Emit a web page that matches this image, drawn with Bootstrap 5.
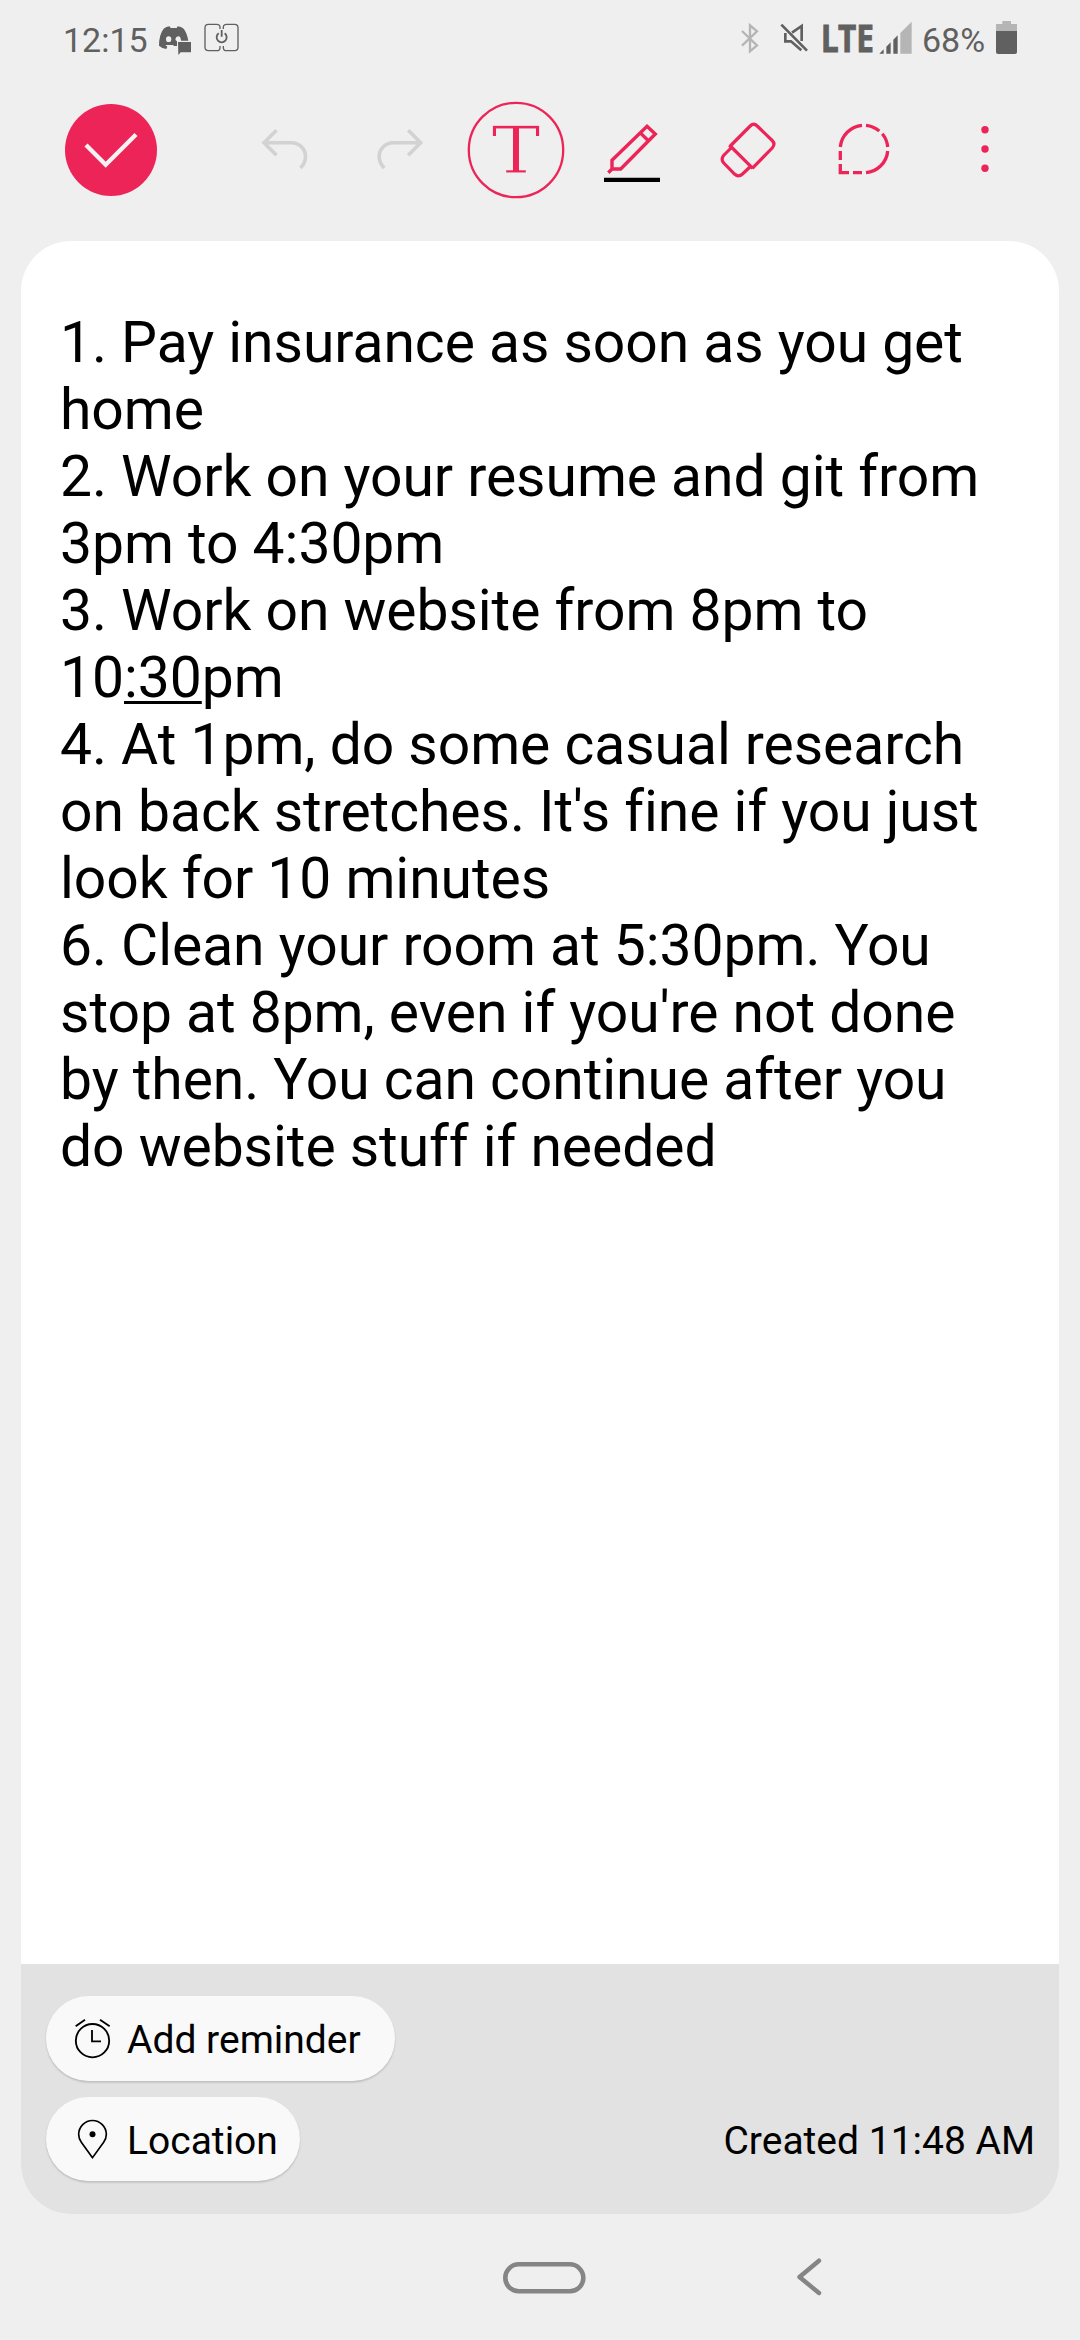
<!DOCTYPE html>
<html lang="en">
<head>
<meta charset="utf-8">
<meta name="viewport" content="width=device-width, initial-scale=1">
<title>Memo</title>
<link rel="stylesheet" href="https://cdn.jsdelivr.net/npm/bootstrap@5.3.0/dist/css/bootstrap.min.css">
<style>
  body { background: #efefef; font-family: Roboto, sans-serif; color: #000; height: 2340px; overflow: hidden; }
  svg { display: block; flex: none; }
  .status { height: 80px; padding: 0 60px 0 63px; color: #606060; font-size: 34px; line-height: 80px; }
  .status .faint { color: #b5b5b5; }
  .toolbar { height: 161px; padding: 10px 32px 0 65px; color: #ec2457; }
  .tool { height: 120px; width: 116px; }
  .tool.more { width: 126px; }
  .tool.off { color: #d2d2d2; }
  .save { width: 92px; height: 120px; margin-right: 69px; }
  .memo { margin: 0 21px; height: 1973px; border-radius: 50px; background: #fff; overflow: hidden; }
  .memo-text { padding: 68px 36px 0 39px; font-size: 57px; letter-spacing: -.04px; line-height: 67px; white-space: nowrap; }
  .memo-text u { text-decoration-thickness: 3px; text-underline-offset: 4px; text-decoration-skip-ink: none; }
  .memo-foot { height: 250px; background: #e2e2e2; padding: 32px 24px 0 25px; font-size: 39px; }
  .chip { height: 85px; border-radius: 43px; background: #f9f9f9; color: #000; box-shadow: 0 1.5px 2px rgba(0,0,0,.17); font-size: inherit; line-height: 85px; gap: 14px; }
  .chip span { padding-top: 4px; line-height: 81px; }
  .chip.remind { width: 349px; margin-bottom: 16px; }
  .chip.place { width: 254px; height: 84px; }
  .created { line-height: 88px; }
  .navkeys { height: 126px; padding-left: 500px; }
  .navkeys .back { margin-left: 204px; }
</style>
<script src="https://cdn.jsdelivr.net/npm/bootstrap@5.3.0/dist/js/bootstrap.bundle.min.js"></script>
</head>
<body class="d-flex flex-column">

<header class="status d-flex">
  <div style="width:92px">12:15</div>
  <svg width="40" height="80" viewBox="345 0 120 240" fill="currentColor">
    <path fill-rule="evenodd" d="M357 137Q357 104 371 86Q378 80 389 79L392 84H410L413 79Q424 80 431 86Q441 99 445 122H423Q422 108 414 109Q407 110 406 118Q407 122 411 124V138H402L399 135H376L382 140L379 147Q366 146 357 137ZM386 109A8 8.500 0 1 0 386 126A8 8.500 0 1 0 386 109Z"/>
    <path d="M414 126H453V157H422L415 165Z"/>
  </svg>
  <svg class="ms-1" width="42" height="80" viewBox="477 0 126 240" fill="none" stroke="currentColor" stroke-width="4">
    <path d="M540 87V82Q540 73 530 73H505Q495 73 495 83V142Q495 152 505 152H530Q540 152 540 143V138M550 87V82Q550 73 560 73H584Q594 73 594 83V142Q594 152 584 152H560Q550 152 550 143V138"/>
    <path stroke-width="5.500" d="M536 100A15 15 0 1 0 554 100M545 90V110"/>
  </svg>
  <div class="ms-auto d-flex">
    <svg class="faint" width="20" height="80" viewBox="60 0 60 240" fill="none" stroke="currentColor" stroke-width="7">
      <path d="M66 93L111 136L90 154V76L111 94L66 137"/>
    </svg>
    <svg style="margin-left:20px" width="30" height="80" viewBox="180 0 90 240" fill="none" stroke="currentColor" stroke-width="8">
      <path d="M184 74L261 152M216 98L245 78V123M196 99V124H213L244 151"/>
    </svg>
    <svg style="margin-left:8px" width="60" height="80" viewBox="-2 0 60 80" overflow="visible">
      <text x="1" y="52" font-family="Noto Sans" font-weight="700" font-size="38" fill="#606060" stroke="#606060" stroke-width=".8" textLength="53" lengthAdjust="spacingAndGlyphs">LTE</text>
    </svg>
    <svg width="36" height="80" viewBox="474 0 108 240" fill="currentColor">
      <path d="M478 161L491 148V161ZM499 140L512 127V161H499ZM520 119L533 106V161H520Z"/>
      <path fill="#b5b5b5" d="M541 99L575 65V161H541Z"/>
    </svg>
    <div style="margin-left:8px;width:72px">68%</div>
    <svg width="26" height="80" viewBox="822 0 78 240">
      <path fill="#b5b5b5" d="M828 72H847V63H873V72H891V93H828Z"/>
      <path fill="currentColor" d="M828 93H891V156Q891 162 885 162H834Q828 162 828 156Z"/>
    </svg>
  </div>
</header>

<nav class="toolbar d-flex align-items-start">
  <svg class="save" viewBox="0 -14 92 120"><circle cx="46" cy="46" r="46" fill="#ec2457"/><path d="M21 41L40.700 60.700L71 30.500" fill="none" stroke="#f4f1f2" stroke-width="4.400"/></svg>
  <svg class="tool off" viewBox="0 0 116 120" fill="none" stroke="currentColor" stroke-width="3.600"><path d="M38 52.700H65.500A14 14 0 0 1 79.500 66.700Q79.500 73 74.500 78M50.500 40.200L38 52.700L50.500 65.200"/></svg>
  <svg class="tool off" viewBox="0 0 116 120" fill="none" stroke="currentColor" stroke-width="3.600"><path d="M78.700 52.700H51.200A14 14 0 0 0 37.200 66.700Q37.200 73 42.200 78M66.200 40.200L78.700 52.700L66.200 65.200"/></svg>
  <svg class="tool" viewBox="0 0 116 120"><circle cx="58" cy="60" r="47.200" fill="none" stroke="currentColor" stroke-width="2.300"/><text x="33.500" y="83.300" font-family="DejaVu Serif" font-size="64.500" fill="currentColor" stroke="#efefef" stroke-width="1.100" textLength="49" lengthAdjust="spacingAndGlyphs">T</text></svg>
  <svg class="tool" viewBox="0 0 116 120" fill="none" stroke="currentColor" stroke-width="3.400"><path d="M73 36.300L81.300 44L46.700 79H38V70.300ZM66 42.600L74.700 51M38.500 78.500L34.300 82.700"/><path d="M30 89.900H86" stroke="#000" stroke-width="4.300"/></svg>
  <svg class="tool" viewBox="0 0 116 120" fill="none" stroke="currentColor" stroke-width="3.200"><path d="M39.300 55L62.800 78.300M40.300 56L60.200 36Q63.700 32.600 67.200 36L82.200 50.500Q85.700 54 82.200 58L62.300 78.300M41 58L33.600 65.500Q30.600 69.300 33.800 73L44.500 84Q48.500 87.600 52.500 84L60.500 76.500"/></svg>
  <svg class="tool" viewBox="0 0 116 120" fill="none" stroke="currentColor" stroke-width="3.300"><path d="M34.300 57A24 24 0 0 1 56 35.300M60 35.300A24 24 0 0 1 73.300 41M76.300 43.700A24 24 0 0 1 81.700 57M81.700 61A24 24 0 0 1 60 82.700M56 82.700H47M43 82.700H34.300V74M34.300 70V61"/></svg>
  <svg class="tool more" viewBox="0 0 126 120" fill="currentColor"><circle cx="63" cy="39.700" r="3.700"/><circle cx="63" cy="59" r="3.700"/><circle cx="63" cy="78.300" r="3.700"/></svg>
</nav>

<main class="memo d-flex flex-column">
  <div class="memo-text flex-grow-1">1. Pay insurance as soon as you get<br>home<br>2. Work on your resume and git from<br>3pm to 4:30pm<br>3. Work on website from 8pm to<br>10<u>:30</u>pm<br>4. At 1pm, do some casual research<br>on back stretches. It's fine if you just<br>look for 10 minutes<br>6. Clean your room at 5:30pm. You<br>stop at 8pm, even if you're not done<br>by then. You can continue after you<br>do website stuff if needed</div>
  <footer class="memo-foot">
    <button class="chip remind btn border-0 p-0 d-flex align-items-center">
      <svg style="margin-left:26px" width="41" height="85" viewBox="216 138 123 255" fill="none" stroke="#000" stroke-width="5.500"><circle cx="277.500" cy="272" r="50"/><path d="M276 240V274H303M227 229L255 209M300 209L329 229"/></svg>
      <span>Add reminder</span>
    </button>
    <div class="d-flex justify-content-between">
      <button class="chip place btn border-0 p-0 d-flex align-items-center">
        <svg style="margin-left:26px" width="41" height="84" viewBox="216 441 123 252" fill="none" stroke="#000" stroke-width="5"><path d="M277.500 623L244 577Q236 566 236 553A41.500 41.500 0 0 1 319 553Q319 566 311 577Z"/><circle cx="277.500" cy="553" r="9" fill="#000" stroke="none"/></svg>
        <span>Location</span>
      </button>
      <div class="created">Created 11:48 AM</div>
    </div>
  </footer>
</main>

<div class="navkeys d-flex">
  <svg width="88" height="126" viewBox="500 2214 88 126" fill="none" stroke="#858585" stroke-width="4.600"><rect x="505.300" y="2264.300" width="78" height="27" rx="13.500"/></svg>
  <svg class="back" width="40" height="126" viewBox="792 2214 40 126" fill="none" stroke="#858585" stroke-width="4.400" stroke-linecap="round" stroke-linejoin="round"><path d="M819 2260.700L799.500 2277L819 2293"/></svg>
</div>
</body>
</html>
